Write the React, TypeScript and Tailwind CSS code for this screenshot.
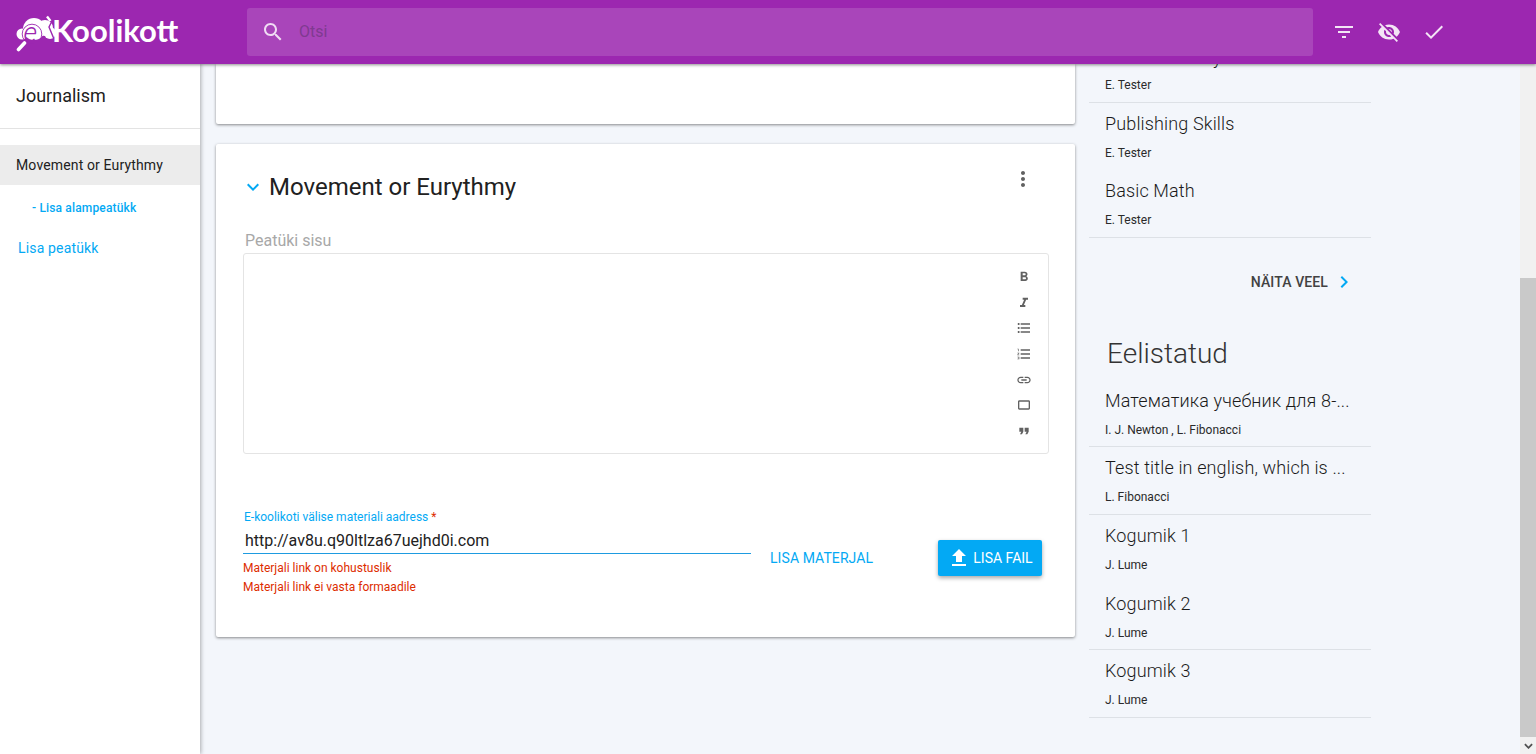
import React from "react";

const P = {
  filter: "M10 18h4v-2h-4v2zM3 6v2h18V6H3zm3 7h12v-2H6v2z",
  eyeOff:
    "M12 7c2.76 0 5 2.24 5 5 0 .65-.13 1.26-.36 1.83l2.92 2.92c1.51-1.26 2.7-2.89 3.43-4.75-1.73-4.39-6-7.5-11-7.5-1.4 0-2.74.25-3.98.7l2.16 2.16C10.74 7.13 11.35 7 12 7zM2 4.27l2.28 2.28.46.46C3.08 8.3 1.78 10.02 1 12c1.73 4.39 6 7.5 11 7.5 1.55 0 3.03-.3 4.38-.84l.42.42L19.73 22 21 20.73 3.27 3 2 4.27zM7.53 9.8l1.55 1.55c-.05.21-.08.43-.08.65 0 1.66 1.34 3 3 3 .22 0 .44-.03.65-.08l1.55 1.55c-.67.33-1.41.53-2.2.53-2.76 0-5-2.24-5-5 0-.79.2-1.53.53-2.2zm4.31-.78l3.15 3.15.02-.16c0-1.66-1.34-3-3-3l-.17.01z",
  check: "M9 16.17L4.83 12l-1.42 1.41L9 19 21 7l-1.41-1.41z",
  search:
    "M15.5 14h-.79l-.28-.27C15.41 12.59 16 11.11 16 9.5 16 5.91 13.09 3 9.5 3S3 5.91 3 9.5 5.91 16 9.5 16c1.61 0 3.09-.59 4.23-1.57l.27.28v.79l5 4.99L20.49 19l-4.99-5zm-6 0C7.01 14 5 11.99 5 9.5S7.01 5 9.5 5 14 7.01 14 9.5 11.99 14 9.5 14z",
  upload: "M9 16h6v-6h4l-7-7-7 7h4zm-4 2h14v2H5z",
  more: "M12 8c1.1 0 2-.9 2-2s-.9-2-2-2-2 .9-2 2 .9 2 2 2zm0 2c-1.1 0-2 .9-2 2s.9 2 2 2 2-.9 2-2-.9-2-2-2zm0 6c-1.1 0-2 .9-2 2s.9 2 2 2 2-.9 2-2-.9-2-2-2z",
  down: "M7.41 8.59L12 13.17l4.59-4.58L18 10l-6 6-6-6z",
  right: "M8.59 16.59L13.17 12 8.59 7.41 10 6l6 6-6 6z",
  bold: "M15.6 10.79c.97-.67 1.65-1.77 1.65-2.79 0-2.26-1.75-4-4-4H7v14h7.04c2.09 0 3.71-1.7 3.71-3.79 0-1.52-.86-2.82-2.15-3.42zM10 6.5h3c.83 0 1.5.67 1.5 1.5s-.67 1.5-1.5 1.5h-3v-3zm3.5 9H10v-3h3.5c.83 0 1.5.67 1.5 1.5s-.67 1.5-1.5 1.5z",
  italic: "M10 4v3h2.21l-3.42 8H6v3h8v-3h-2.21l3.42-8H18V4z",
  ul: "M4 10.5c-.83 0-1.5.67-1.5 1.5s.67 1.5 1.5 1.5 1.5-.67 1.5-1.5-.67-1.5-1.5-1.5zm0-6c-.83 0-1.5.67-1.5 1.5S3.17 7.5 4 7.5 5.5 6.83 5.5 6 4.83 4.5 4 4.5zm0 12c-.83 0-1.5.68-1.5 1.5s.68 1.5 1.5 1.5 1.5-.68 1.5-1.5-.67-1.5-1.5-1.5zM7 19h14v-2H7v2zm0-6h14v-2H7v2zm0-8v2h14V5H7z",
  ol: "M2 17h2v.5H3v1h1v.5H2v1h3v-4H2v1zm1-9h1V4H2v1h1v3zm-1 3h1.8L2 13.1v.9h3v-1H3.2L5 10.9V10H2v1zm5-6v2h14V5H7zm0 14h14v-2H7v2zm0-6h14v-2H7v2z",
  link: "M3.9 12c0-1.71 1.39-3.1 3.1-3.1h4V7H7c-2.76 0-5 2.24-5 5s2.24 5 5 5h4v-1.9H7c-1.71 0-3.1-1.39-3.1-3.1zM8 13h8v-2H8v2zm9-6h-4v1.9h4c1.71 0 3.1 1.39 3.1 3.1s-1.39 3.1-3.1 3.1h-4V17h4c2.76 0 5-2.24 5-5s-2.24-5-5-5z",
  rect: "M19 5H5c-1.1 0-2 .9-2 2v10c0 1.1.9 2 2 2h14c1.1 0 2-.9 2-2V7c0-1.1-.9-2-2-2zm0 12H5V7h14v10z",
  quote: "M6 17h3l2-4V7H5v6h3zm8 0h3l2-4V7h-6v6h3z",
};

function Icon({ d, className }: { d: string; className: string }) {
  return (
    <svg viewBox="0 0 24 24" className={className} fill="currentColor">
      <path d={d} />
    </svg>
  );
}

function Logo() {
  return (
    <div className="flex items-center w-[247px] pl-[15px] text-white">
      <svg viewBox="15 12 46 40" className="w-[46px] h-[40px] shrink-0" fill="white">
        <circle cx="34" cy="29" r="11" />
        <circle cx="22" cy="34" r="5.5" />
        <circle cx="45" cy="28" r="8" />
        <circle cx="50" cy="33" r="6" />
        <circle cx="32" cy="34" r="9.8" fill="none" stroke="#9c27b0" strokeWidth="0.9" />
        <path d="M24.5 43 L18.5 49.5" stroke="white" strokeWidth="3.6" strokeLinecap="round" />
        <text x="23.5" y="42" fontFamily="Roboto, sans-serif" fontWeight="300" fontStyle="italic" fontSize="27" fill="#9c27b0">
          e
        </text>
        <path d="M50 17 L52 21 L49 27 L54 39" stroke="#9c27b0" strokeWidth="1.4" fill="none" />
        <path d="M47 16.5 L50.5 21" stroke="white" strokeWidth="2.4" />
      </svg>
      <span className="ml-[-9px] font-['Lato',sans-serif] font-bold text-[31px] leading-none mt-[-4px]">Koolikott</span>
    </div>
  );
}

function Row({ title, author, line = true, first = false }: { title: string; author: string; line?: boolean; first?: boolean }) {
  return (
    <div className={`h-[67.6px] pl-4 shrink-0 ${first ? "pt-[9px]" : "pt-[7px]"} ${line ? "border-b border-[#dde1e6]" : ""}`}>
      <div className="text-[18px] leading-[27px] font-light tracking-[0.14px] text-[#1a1a1a] whitespace-nowrap">{title}</div>
      <div className={`text-[12px] leading-4 text-[#2a2a2a] ${first ? "mt-[6px]" : "mt-[8px]"}`}>{author}</div>
    </div>
  );
}

const tools = [P.bold, P.italic, P.ul, P.ol, P.link, P.rect, P.quote];

export default function App() {
  return (
    <div className="h-screen w-full flex flex-col overflow-hidden bg-[#f3f6fb] font-['Roboto',sans-serif]">
      <header className="relative z-10 h-16 shrink-0 bg-[#9c27b0] flex items-center shadow-[0_1px_3px_rgba(0,0,0,0.45)]">
        <Logo />
        <div className="w-[1066px] h-12 rounded-[3px] bg-[#a945ba] flex items-center pl-[14px]">
          <Icon d={P.search} className="w-6 h-6 text-[#f0dcf4]" />
          <input
            placeholder="Otsi"
            className="ml-[14px] flex-1 bg-transparent outline-none text-[16px] placeholder:text-[#7f3a90]"
          />
        </div>
        <div className="flex items-center gap-[21px] ml-[19px] text-[#f3e5f5]">
          <Icon d={P.filter} className="w-6 h-6" />
          <Icon d={P.eyeOff} className="w-6 h-6" />
          <Icon d={P.check} className="w-6 h-6" />
        </div>
      </header>

      <div className="flex-1 flex min-h-0">
        <aside className="w-[200px] shrink-0 bg-white shadow-[1px_0_4px_rgba(0,0,0,0.3)] relative">
          <div className="h-[65px] pl-4 pb-[2px] flex items-center border-b border-[#e3e3e3] text-[18px] text-[#212121]">Journalism</div>
          <div className="mt-4 h-10 bg-[#ececec] pl-4 flex items-center text-[14px] tracking-[0.14px] text-[#212121]">Movement or Eurythmy</div>
          <div className="h-[46px] pl-8 flex items-center text-[12px] font-medium tracking-[0.16px] text-[#03a9f4]">- Lisa alampeatükk</div>
          <div className="pl-[18px] mt-[1px] h-[33px] flex items-center text-[14px] tracking-[0.16px] text-[#03a9f4]">Lisa peatükk</div>
        </aside>

        <main className="w-[859px] ml-4 shrink-0">
          <div className="h-[60px] bg-white rounded-b-[2px] shadow-[0_1px_3px_rgba(0,0,0,0.45)]" />
          <section className="relative mt-5 h-[493px] bg-white rounded-[2px] shadow-[0_1px_3px_rgba(0,0,0,0.45)] pl-[27px] pr-[26px]">
            <div className="flex items-center h-[86px]">
              <Icon d={P.down} className="w-6 h-6 ml-[-2px] text-[#03a9f4] shrink-0" />
              <h2 className="ml-[4px] text-[24px] text-[#212121]">Movement or Eurythmy</h2>
              <Icon d={P.more} className="w-6 h-6 text-[#616161] ml-auto mr-[14px] mb-[17px] shrink-0" />
            </div>
            <div className="pl-[2px] text-[16px] leading-5 mt-[1px] text-[#a8a8a8]">Peatüki sisu</div>
            <div className="mt-[2px] h-[201px] rounded-[3px] border border-[#e4e4e4] flex flex-col items-end pr-[16px] pt-[15px] gap-[9.7px]">
              {tools.map((d, i) => (
                <Icon key={i} d={d} className="w-4 h-4 text-[#616161]" />
              ))}
            </div>
            <div className="mt-[55px] flex items-start">
              <div className="w-[508px] shrink-0">
                <div className="pl-[1px] text-[12px] leading-4 text-[#03a9f4]">
                  E-koolikoti välise materiali aadress <span className="text-[#dd2c00]">*</span>
                </div>
                <div className="mt-[2px] pl-[2px] h-[27px] leading-[28px] text-[16px] text-[#212121] border-b border-[#1e9be0]">http://av8u.q90ltlza67uejhd0i.com</div>
                <div className="mt-[6px] text-[12px] leading-4 text-[#dd2c00]">Materjali link on kohustuslik</div>
                <div className="mt-[3px] text-[12px] leading-4 text-[#dd2c00]">Materjali link ei vasta formaadile</div>
              </div>
              <div className="ml-[19px] mt-[39px] text-[14px] leading-5 tracking-[0.08px] text-[#03a9f4] whitespace-nowrap">LISA MATERJAL</div>
              <button className="ml-auto mr-[7px] mt-[31px] w-[104px] h-9 rounded-[2px] bg-[#03a9f4] text-white text-[14px] flex items-center justify-center gap-[2px] shadow-[0_2px_4px_rgba(0,0,0,0.35)]">
                <Icon d={P.upload} className="w-6 h-6 shrink-0" />
                LISA FAIL
              </button>
            </div>
          </section>
        </main>

        <div className="w-[282px] ml-[14px] shrink-0 mt-[-29px]">
          <Row title="Media Literacy" author="E. Tester" first />
          <Row title="Publishing Skills" author="E. Tester" line={false} />
          <Row title="Basic Math" author="E. Tester" />
          <div className="h-[88px] flex items-center justify-end pr-[15px] pt-[1px]">
            <span className="text-[14px] font-medium tracking-[0.1px] text-[#424242]">NÄITA VEEL</span>
            <Icon d={P.right} className="w-6 h-6 ml-1 text-[#03a9f4]" />
          </div>
          <h3 className="h-[53px] pl-[18px] text-[28px] leading-[53px] font-light text-[#333] mt-[1px]">Eelistatud</h3>
          <Row title="Математика учебник для 8-..." author="I. J. Newton , L. Fibonacci" />
          <Row title="Test title in english, which is ..." author="L. Fibonacci" />
          <Row title="Kogumik 1" author="J. Lume" line={false} />
          <Row title="Kogumik 2" author="J. Lume" />
          <Row title="Kogumik 3" author="J. Lume" />
        </div>

        <div className="ml-auto w-4 shrink-0 bg-[#f1f1f1] flex flex-col">
          <div className="h-[214px] shrink-0" />
          <div className="flex-1 bg-[#c9c9c9]" />
          <div className="h-[17px] shrink-0 flex items-center justify-center">
            <svg viewBox="0 0 10 6" className="w-[9px] h-[6px]" fill="none" stroke="#505050" strokeWidth="2">
              <path d="M1 1 L5 5 L9 1" />
            </svg>
          </div>
        </div>
      </div>
    </div>
  );
}
